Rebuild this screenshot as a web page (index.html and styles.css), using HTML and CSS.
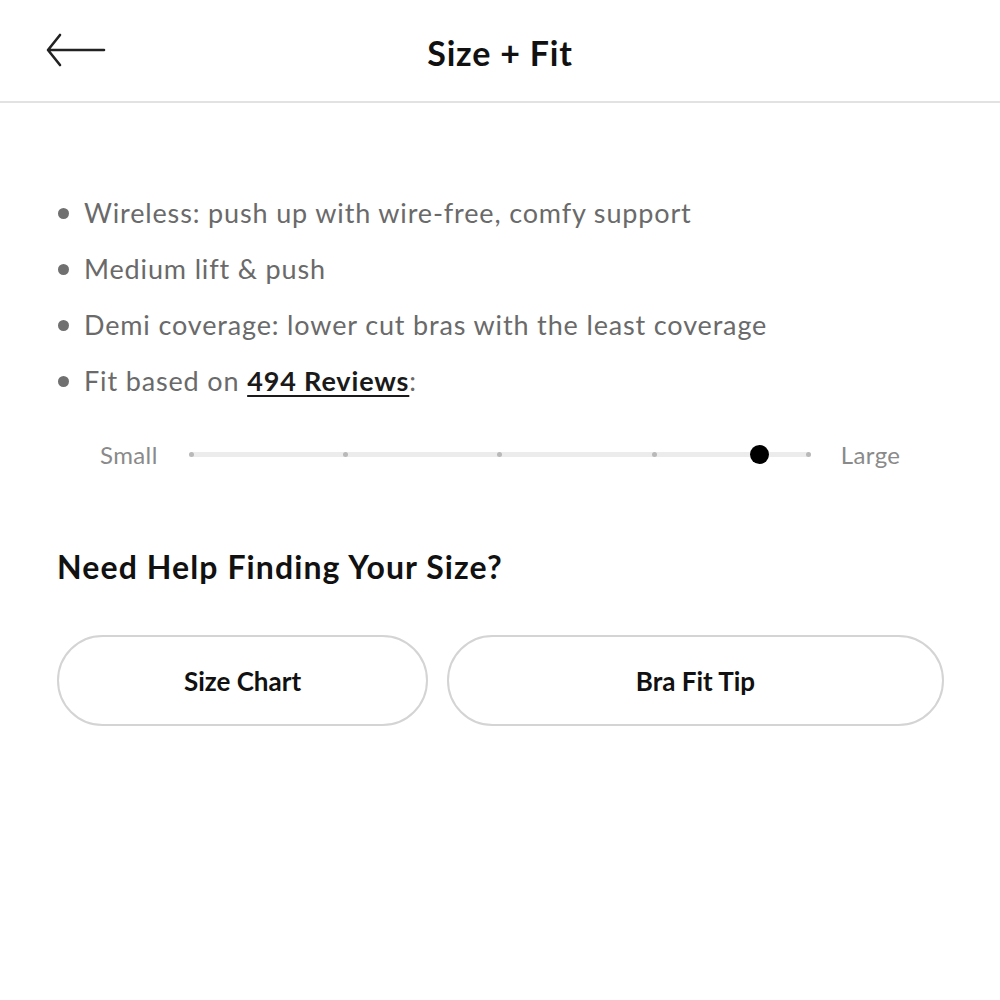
FILE: index.html
```html
<!DOCTYPE html>
<html>
<head>
<meta charset="utf-8">
<link rel="stylesheet" href="styles.css">
</head>
<body>
<header class="topbar">
  <button class="back" aria-label="Back">
    <svg width="60" height="34" viewBox="0 0 60 34" fill="none" stroke="#222" stroke-width="2.6" stroke-linecap="round" stroke-linejoin="round">
      <path d="M58 17H3M14 2L2 17L14 32"/>
    </svg>
  </button>
  <h1 class="title">Size + Fit</h1>
</header>
<main class="content">
  <ul class="features">
    <li>Wireless: push up with wire-free, comfy support</li>
    <li>Medium lift &amp; push</li>
    <li>Demi coverage: lower cut bras with the least coverage</li>
    <li>Fit based on <a class="reviews" href="#">494 Reviews</a>:</li>
  </ul>
  <div class="fit-scale">
    <span class="scale-label">Small</span>
    <div class="track">
      <span class="tick"></span>
      <span class="tick"></span>
      <span class="tick"></span>
      <span class="tick"></span>
      <span class="tick"></span>
      <span class="knob" style="left: 91.8%"></span>
    </div>
    <span class="scale-label">Large</span>
  </div>
  <h2 class="help">Need Help Finding Your Size?</h2>
  <div class="actions">
    <button class="pill">Size Chart</button>
    <button class="pill">Bra Fit Tip</button>
  </div>
</main>
</body>
</html>
```
FILE: styles.css
```css
* { box-sizing: border-box; }
html, body { margin: 0; padding: 0; background: #fff; }
body {
  font-family: "Lato", "Noto Sans", sans-serif;
  color: #111;
  width: 1000px;
}
.topbar {
  height: 103px;
  border-bottom: 2px solid #e2e2e2;
  display: flex;
  align-items: center;
  justify-content: center;
  position: relative;
}
.back {
  position: absolute;
  left: 46px;
  top: 33px;
  padding: 0;
  border: 0;
  background: none;
  line-height: 0;
}
.title {
  margin: 0;
  font-size: 34px;
  font-weight: 700;
  color: #111;
  letter-spacing: 0.8px;
  padding-top: 4px;
}
.content {
  padding: 82px 57px 0 57px;
}
.features {
  list-style: none;
  margin: 0;
  padding: 0;
}
.features li {
  position: relative;
  padding-left: 27px;
  font-size: 27px;
  line-height: 56px;
  color: #6a6a6a;
  letter-spacing: 0.85px;
}
.features li::before {
  content: "";
  position: absolute;
  left: 1px;
  top: 23px;
  width: 11px;
  height: 11px;
  border-radius: 50%;
  background: #707070;
}
.reviews {
  color: #1a1a1a;
  font-weight: 700;
  text-decoration: underline;
  text-decoration-thickness: 2px;
  text-underline-offset: 4px;
}
.fit-scale {
  display: flex;
  align-items: center;
  margin: 25px 0 0 43px;
  width: 850px;
  height: 40px;
}
.scale-label {
  font-size: 24px;
  color: #8a8a8a;
  letter-spacing: 0.4px;
}
.track {
  position: relative;
  margin: 0 30px 0 31px;
  flex: 0 0 622px;
  height: 5px;
  background: #ececec;
  border-radius: 3px;
  display: flex;
  justify-content: space-between;
  align-items: center;
}
.tick {
  width: 5px;
  height: 5px;
  border-radius: 50%;
  background: #b9b9b9;
}
.knob {
  position: absolute;
  top: 50%;
  width: 19px;
  height: 19px;
  margin: -9.5px 0 0 -9.5px;
  border-radius: 50%;
  background: #000;
}
.help {
  margin: 73px 0 0 0;
  font-size: 32px;
  font-weight: 700;
  letter-spacing: 1.1px;
  color: #111;
}
.actions {
  margin-top: 49px;
  display: grid;
  grid-template-columns: 371px 497px;
  gap: 19px;
}
.pill {
  height: 91px;
  border: 2px solid #d4d4d4;
  border-radius: 46px;
  background: #fff;
  font-family: inherit;
  font-size: 26px;
  font-weight: 700;
  color: #111;
}
```
